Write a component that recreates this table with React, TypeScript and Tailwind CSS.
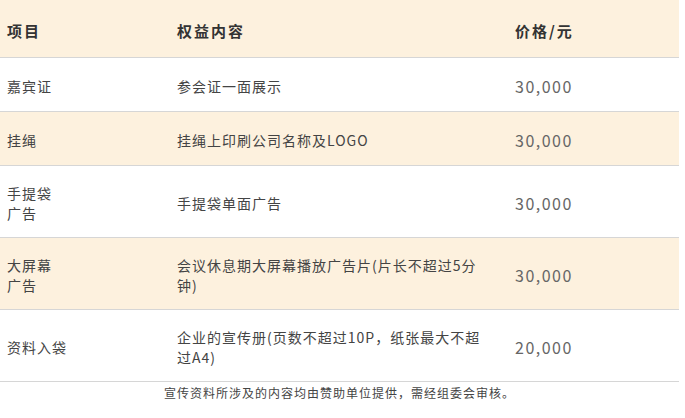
import React from 'react';

interface SponsorRow {
  item: string[];
  content: string;
  price: string;
  shaded: boolean;
  tall?: boolean;
}

const rows: SponsorRow[] = [
  { item: ['嘉宾证'], content: '参会证一面展示', price: '30,000', shaded: false },
  { item: ['挂绳'], content: '挂绳上印刷公司名称及LOGO', price: '30,000', shaded: true },
  { item: ['手提袋', '广告'], content: '手提袋单面广告', price: '30,000', shaded: false, tall: true },
  { item: ['大屏幕', '广告'], content: '会议休息期大屏幕播放广告片(片长不超过5分钟)', price: '30,000', shaded: true, tall: true },
  { item: ['资料入袋'], content: '企业的宣传册(页数不超过10P，纸张最大不超过A4)', price: '20,000', shaded: false, tall: true },
];

export default function App() {
  return (
    <div
      className="w-[685px] h-[418px] bg-white"
      style={{ fontFamily: '"Noto Sans CJK SC", "Noto Sans", sans-serif' }}
    >
      <table className="w-[679px] border-collapse table-fixed">
        <colgroup>
          <col className="w-[170px]" />
          <col className="w-[338px]" />
          <col className="w-[171px]" />
        </colgroup>
        <thead>
          <tr className="h-[57px] bg-[#fdf1de] border-b border-[#d6d6d6]">
            <th className="px-[7px] pt-[5px] text-left align-middle text-[15px] font-bold tracking-[2px] text-[#333]">项目</th>
            <th className="px-[7px] pt-[5px] text-left align-middle text-[15px] font-bold tracking-[2px] text-[#333]">权益内容</th>
            <th className="px-[7px] pt-[5px] text-left align-middle text-[15px] font-bold tracking-[2px] text-[#333]">价格/元</th>
          </tr>
        </thead>
        <tbody>
          {rows.map((row) => (
            <tr
              key={row.content}
              className={`${row.tall ? 'h-[72px]' : 'h-[54px]'} ${row.shaded ? 'bg-[#fdf1de]' : 'bg-white'} border-b border-[#d6d6d6]`}
            >
              <td className="px-[7px] pt-[3px] align-middle text-[14px] leading-[20px] tracking-[1px] text-[#444]">
                {row.item.map((line) => (
                  <div key={line}>{line}</div>
                ))}
              </td>
              <td className="px-[7px] pt-[3px] align-middle text-[14px] leading-[20px] tracking-[1px] text-[#444]">
                <div className="w-[305px]">{row.content}</div>
              </td>
              <td className="px-[7px] pt-[3px] align-middle text-[16px] tracking-[1.5px] text-[#666]">{row.price}</td>
            </tr>
          ))}
        </tbody>
      </table>
      <p className="w-[679px] pt-[2px] text-center text-[12px] leading-[18px] tracking-[1px] text-[#444]">
        宣传资料所涉及的内容均由赞助单位提供，需经组委会审核。
      </p>
    </div>
  );
}
